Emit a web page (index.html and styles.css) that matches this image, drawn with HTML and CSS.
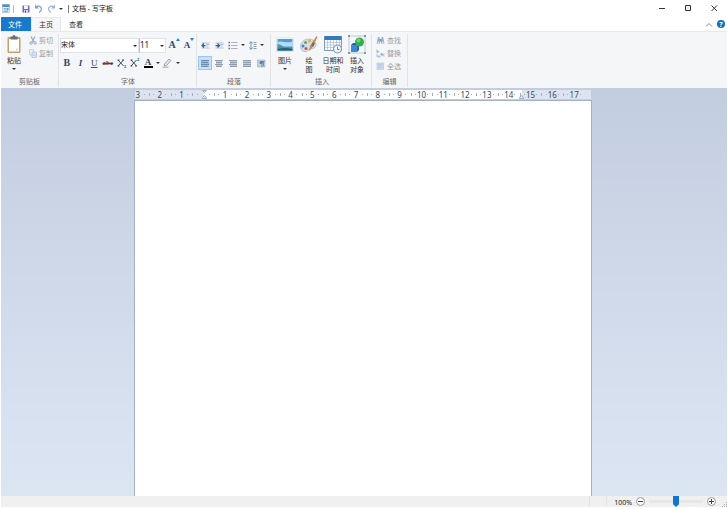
FILE: index.html
```html
<!DOCTYPE html>
<html lang="zh-CN">
<head>
<meta charset="utf-8">
<title>文档 - 写字板</title>
<link rel="stylesheet" href="styles.css">
</head>

<body>
<header class="titlebar">
	<svg class="ico" width="8" height="9" viewBox="0 0 16 18"><rect x="1" y="1" width="14" height="16" fill="#e6f1f9" stroke="#86a5bd"/><path d="M1 1h14v5H1z" fill="#4a90c4"/><path d="M3 9h5M3 12h5M3 15h9" stroke="#7f99ad" stroke-width="1.5"/><path d="M9 8h4v5H9z" fill="#5d9dcb"/></svg>
	<i class="sep"></i>
	<div class="quick">
		<button aria-label="保存"><svg width="8" height="8" viewBox="0 0 16 16"><path d="M1 1h14v14H1z" fill="#7a68ae"/><path d="M4 1h8v7H4z" fill="#f3f1fa"/><path d="M4 10h8v5H4z" fill="#ddd8ee"/><path d="M6 11h2v4H6z" fill="#51427f"/></svg></button>
		<button aria-label="撤消"><svg width="9" height="9" viewBox="0 0 18 18"><path d="M4 6c5-4 11-1 11 4 0 3-2 5-5 7" fill="none" stroke="#8a9cc0" stroke-width="2.5"/><path d="M2 1v8h8z" fill="#8a9cc0"/></svg></button>
		<button aria-label="重做"><svg width="9" height="9" viewBox="0 0 18 18"><path d="M14 6C9 2 3 5 3 10c0 3 2 5 5 7" fill="none" stroke="#a5b5cf" stroke-width="2.5"/><path d="M16 1v8H8z" fill="#a5b5cf"/></svg></button>
	</div>
	<button class="more" aria-label="自定义快速访问工具栏"><i class="down"></i></button>
	<i class="sep dark"></i>
	<h1>文档 - 写字板</h1>
	<div class="winbtns">
		<button aria-label="最小化"><svg width="7" height="7" viewBox="0 0 7 7"><path d="M0 3.500h6" stroke="#333"/></svg></button>
		<button aria-label="最大化"><svg width="7" height="7" viewBox="0 0 7 7"><path d="M.5.5h5v5h-5z" fill="none" stroke="#333"/></svg></button>
		<button aria-label="关闭"><svg width="7" height="7" viewBox="0 0 7 7"><path d="M.5.5l5.500 5.500M6 .5L.5 6" stroke="#333"/></svg></button>
	</div>
</header>

<nav class="tabs">
	<button class="file">文件</button>
	<button class="on">主页</button>
	<button>查看</button>
	<div class="tabs-right">
		<button aria-label="最小化功能区"><svg width="8" height="5" viewBox="0 0 8 5"><path d="M1 4.500l3-3 3 3" fill="none" stroke="#8d8580"/></svg></button>
		<button class="help" aria-label="帮助">?</button>
	</div>
</nav>

<div class="ribbon">
	<section class="group clip">
		<div class="body">
			<button class="big paste">
				<svg width="16" height="19" viewBox="0 0 32 38"><rect x="3" y="4" width="26" height="32" rx="2" fill="#c3a36b"/><path d="M6 8h20v25H6z" fill="#fff"/><path d="M20 33v-6h6z" fill="#d7dde4"/><path d="M9 3h4a3 3 0 0 1 6 0h4v6H9z" fill="#6b7076"/></svg>
				<span>粘贴</span>
				<i class="down"></i>
			</button>
			<div class="lines">
				<button disabled><svg width="8" height="9" viewBox="0 0 16 18"><path d="M4 1l6 11M12 1L6 12" stroke="#9aabc4" stroke-width="2.500"/><circle cx="4" cy="14" r="2.500" fill="none" stroke="#9aabc4" stroke-width="2"/><circle cx="12" cy="14" r="2.500" fill="none" stroke="#9aabc4" stroke-width="2"/></svg>剪切</button>
				<button disabled><svg width="8" height="9" viewBox="0 0 16 18"><path d="M1 1h8v11H1z" fill="#eaf0f8" stroke="#b9c8de" stroke-width="1.500"/><path d="M6 6h9v11H6z" fill="#dde7f4" stroke="#adbfd9" stroke-width="1.500"/><path d="M8 10h5M8 13h5" stroke="#adbfd9"/></svg>复制</button>
			</div>
		</div>
		<h2>剪贴板</h2>
	</section>

	<section class="group font">
		<div class="body stack">
			<div class="row">
				<label class="combo name"><select aria-label="字体系列"><option>宋体</option></select></label>
				<label class="combo size"><select aria-label="字体大小"><option>11</option></select></label>
				<button class="grow" aria-label="增大字体">A<svg width="4" height="3" viewBox="0 0 4 3"><path d="M0 3l2-3 2 3z" fill="#2b83cf"/></svg></button>
				<button class="grow small" aria-label="缩小字体">A<svg width="4" height="3" viewBox="0 0 4 3"><path d="M0 0h4L2 3z" fill="#2b83cf"/></svg></button>
			</div>
			<div class="row">
				<div class="styles">
					<button><b>B</b></button>
					<button><i>I</i></button>
					<button><u>U</u></button>
					<button><s>abc</s></button>
					<button class="x" aria-label="下标"><svg width="10" height="10" viewBox="0 0 20 20"><path d="M2 4l11 12M13 4L2 16M1 4h4M10 4h4M1 16h4" stroke="#34466b" stroke-width="2"/><path d="M15 15h3l-3 4h4" fill="none" stroke="#2b83cf" stroke-width="1.500"/></svg></button>
					<button class="x" aria-label="上标"><svg width="10" height="10" viewBox="0 0 20 20"><path d="M2 4l11 12M13 4L2 16M1 4h4M1 16h4M10 16h4" stroke="#34466b" stroke-width="2"/><path d="M15 1h3l-3 4h4" fill="none" stroke="#2b83cf" stroke-width="1.500"/></svg></button>
				</div>
				<button class="color" aria-label="文本颜色"><span>A</span><i class="down"></i></button>
				<button class="color" aria-label="文本突出显示颜色"><svg width="11" height="10" viewBox="0 0 22 20"><path d="M5 12L14 2l4 3-9 10-5 1z" fill="#dfe6ee" stroke="#7d8ca0" stroke-width="1.500"/><path d="M1 17h12v3H1z" fill="#b9c3cf"/></svg><i class="down"></i></button>
			</div>
		</div>
		<h2>字体</h2>
	</section>

	<section class="group para">
		<div class="body stack">
			<div class="row">
				<button class="tool" aria-label="减少缩进"><svg width="9" height="7" viewBox="0 0 18 14"><path d="M1 2h16M10 5h7M10 8h5M1 12h16" stroke="#a3afc0" stroke-width="1.500"/><path d="M9 7H3M6 3L2 7l4 4" fill="none" stroke="#2f5f9c" stroke-width="2.500"/></svg></button>
				<button class="tool" aria-label="增加缩进"><svg width="9" height="7" viewBox="0 0 18 14"><path d="M1 2h16M11 5h6M11 8h4M1 12h16" stroke="#a3afc0" stroke-width="1.500"/><path d="M1 7h7M5 3l4 4-4 4" fill="none" stroke="#2f5f9c" stroke-width="2.500"/></svg></button>
				<button class="drop" aria-label="启动一个列表"><svg width="10" height="9" viewBox="0 0 20 18"><path d="M6 3h13M6 9h13M6 15h13" stroke="#8d99aa" stroke-width="1.500"/><path d="M1 3h3M1 9h3M1 15h3" stroke="#3e78b5" stroke-width="3"/></svg><i class="down"></i></button>
				<button class="drop" aria-label="行距"><svg width="8" height="9" viewBox="0 0 16 18"><path d="M9 3h6M9 7h6M9 11h6M9 15h6" stroke="#8d99aa" stroke-width="2"/><path d="M4 2v14M1 5l3-4 3 4M1 13l3 4 3-4" fill="none" stroke="#4478ad" stroke-width="1.500"/></svg><i class="down"></i></button>
			</div>
			<div class="row">
				<button class="tool on" aria-label="向左对齐文本"><svg width="8" height="7" viewBox="0 0 8 7"><path d="M0 0h8v7H0z" fill="#a3bbd6"/><path d="M0 .5h8M0 2.500h7M0 4.500h8M0 6.500h7" stroke="#6f8db0"/></svg></button>
				<button class="tool" aria-label="居中"><svg width="8" height="7" viewBox="0 0 8 7"><path d="M1 0h6v7H1z" fill="#c3cad4"/><path d="M0 .5h8M1 2.500h6M0 4.500h8M1 6.500h6" stroke="#919dae"/></svg></button>
				<button class="tool" aria-label="向右对齐文本"><svg width="8" height="7" viewBox="0 0 8 7"><path d="M1 0h7v7H1z" fill="#c3cad4"/><path d="M0 .5h8M1 2.500h7M0 4.500h8M1 6.500h7" stroke="#919dae"/></svg></button>
				<button class="tool" aria-label="对齐"><svg width="8" height="7" viewBox="0 0 8 7"><path d="M0 0h8v7H0z" fill="#c3cad4"/><path d="M0 .5h8M0 2.500h8M0 4.500h8M0 6.500h8" stroke="#919dae"/></svg></button>
				<button class="tool" aria-label="段落"><svg width="9" height="9" viewBox="0 0 18 18"><path d="M1 2h15v14H1z" fill="#c3d0de" stroke="#93a5ba"/><path d="M8 5h7M10 5v11M13 5v9" stroke="#557aa3" stroke-width="1.500"/><circle cx="8" cy="7" r="3" fill="#557aa3"/></svg></button>
			</div>
		</div>
		<h2>段落</h2>
	</section>

	<section class="group insert">
		<div class="body">
			<button class="big">
				<svg width="18" height="19" viewBox="0 0 36 38"><path d="M1 6h34v27H1z" fill="#fff" stroke="#c5ced6"/><path d="M3 8h30v23H3z" fill="#4d9fdc"/><path d="M3 14c8-4 20 4 30-1v10H3z" fill="#b5dcf3"/><path d="M3 18c6 1 10 4 14 6h16v7H3z" fill="#4c96a8"/><path d="M3 28c10-3 20-3 30 0v3H3z" fill="#2b5f70"/></svg>
				<span>图片</span>
				<i class="down"></i>
			</button>
			<button class="big">
				<svg width="18" height="19" viewBox="0 0 36 38"><path d="M17 8C8 8 1 15 1 23c0 8 6 12 12 10 4-1 3-5 7-5 6 0 12-2 12-9 0-7-7-11-15-11z" fill="#d5dee8" stroke="#8c9fb5"/><circle cx="11" cy="15" r="3" fill="#5bad55"/><circle cx="6" cy="22" r="3" fill="#3d89d1"/><circle cx="19" cy="12" r="3" fill="#e7b43f"/><circle cx="12" cy="27" r="3" fill="#cf5348"/><path d="M33 2l2 2-10 20-7 9 2-11z" fill="#c68a50"/><path d="M26 14l4 3-4 7-4-3z" fill="#7d6a60"/></svg>
				<span>绘<br>图</span>
			</button>
			<button class="big">
				<svg width="18" height="19" viewBox="0 0 36 38"><path d="M1 3h34v28H1z" fill="#fff" stroke="#7f9ab8" stroke-width="2"/><path d="M1 2h34v8H1z" fill="#3479be"/><path d="M2 15h32M2 20h32M2 25h32M7 10v20M13 10v20M19 10v20M25 10v20M31 10v20" stroke="#88a9cc"/><circle cx="27" cy="28" r="8" fill="#f4f7fa" stroke="#8796a6" stroke-width="2"/><path d="M27 23v6h4" fill="none" stroke="#526273" stroke-width="1.500"/></svg>
				<span>日期和<br>时间</span>
			</button>
			<button class="big">
				<svg width="18" height="19" viewBox="0 0 36 38"><path d="M2 2h32v34H2z" fill="#f4f9fd" stroke="#8d9cac"/><path d="M6 20l4-4h12v14l-4 4H6z" fill="#1f62b0"/><path d="M6 20h12v14H6z" fill="#3d89d6"/><circle cx="23" cy="14" r="9" fill="#38ad4b"/><circle cx="21" cy="11" r="4" fill="#75cf78"/><path d="M0 0h4v4H0zM32 0h4v4h-4zM0 34h4v4H0zM32 34h4v4h-4z" fill="#8595a5"/></svg>
				<span>插入<br>对象</span>
			</button>
		</div>
		<h2>插入</h2>
	</section>

	<section class="group edit">
		<div class="body">
			<div class="lines">
				<button disabled><svg width="9" height="9" viewBox="0 0 18 18"><path d="M4 2h3l1 13H1zM11 2h3l3 13h-7z" fill="#9aaccb"/><path d="M7 6h4v5H7z" fill="#8195b8"/><path d="M3 11h3v3H3zM12 11h3v3h-3z" fill="#dce5f1"/></svg>查找</button>
				<button disabled><svg width="9" height="9" viewBox="0 0 18 18"><path d="M2 1v6M2 5c4-3 5 3 0 2" fill="none" stroke="#899bb7" stroke-width="1.500"/><path d="M2 10v5h5M5 12l3 3-3 3" fill="none" stroke="#8aabcf" stroke-width="1.500"/><path d="M12 9c-3-2-4 5 0 3v-3 4M17 10c-4-2-4 6 0 4" fill="none" stroke="#899bb7" stroke-width="1.500"/></svg>替换</button>
				<button disabled><svg width="9" height="9" viewBox="0 0 18 18"><path d="M2 2h13v13H2z" fill="#cfdced" stroke="#a7bad2"/><path d="M4 5h9M4 8h9M4 11h9" stroke="#a7bad2"/></svg>全选</button>
			</div>
		</div>
		<h2>编辑</h2>
	</section>
</div>

<main class="desk">
	<div class="ruler">
		<ul>
			<li>3</li><li>2</li><li>1</li><li></li><li>1</li><li>2</li><li>3</li>
			<li>4</li><li>5</li><li>6</li><li>7</li><li>8</li><li>9</li><li>10</li>
			<li>11</li><li>12</li><li>13</li><li>14</li><li>15</li><li>16</li><li>17</li>
		</ul>
		<svg class="mark left" width="5" height="11" viewBox="0 0 5 11"><path d="M.5 1.500h4l-2 2zM.5 9.500v-1l2-2 2 2v1z" fill="#dde2ea" stroke="#a3abb8"/></svg>
		<svg class="mark right" width="5" height="11" viewBox="0 0 5 11"><path d="M.5 9.500v-1l2-2 2 2v1z" fill="#dde2ea" stroke="#a3abb8"/></svg>
	</div>
	<textarea class="paper" aria-label="文档"></textarea>
</main>

<footer class="status">
	<i class="cell"></i>
	<div class="zoom">
		<label for="zoom">100%</label>
		<button aria-label="缩小"><svg width="9" height="9" viewBox="0 0 9 9"><circle cx="4.500" cy="4.500" r="4" fill="#fafafa" stroke="#9b9b9b"/><path d="M2 4.500h5" stroke="#444"/></svg></button>
		<input type="range" id="zoom" min="0" max="200" value="100">
		<button aria-label="放大"><svg width="9" height="9" viewBox="0 0 9 9"><circle cx="4.500" cy="4.500" r="4" fill="#fafafa" stroke="#9b9b9b"/><path d="M2 4.500h5M4.500 2v5" stroke="#444"/></svg></button>
		<svg class="grip" width="5" height="5" viewBox="0 0 5 5"><path d="M4 0h1v1H4zM2 2h1v1H2zM4 2h1v1H4zM0 4h1v1H0zM2 4h1v1H2zM4 4h1v1H4z" fill="#aaa"/></svg>
	</div>
</footer>
</body>
</html>
```
FILE: styles.css
```css
*{
	box-sizing:border-box;
}
body{
	margin:0;
	padding:0 1px 2px;
	height:100vh;
	display:flex;
	flex-direction:column;
	background:#fff;
	color:#333;
	font:7px/9px "Noto Sans","Noto Sans CJK SC",sans-serif;
	overflow:hidden;
}
button{
	display:flex;
	align-items:center;
	justify-content:center;
	margin:0;
	padding:0;
	border:0;
	background:none;
	color:inherit;
	font:inherit;
}
h1,h2{
	margin:0;
	font:inherit;
}
svg{
	display:block;
	flex:none;
}
.down{
	flex:none;
	width:4px;
	border:2px solid transparent;
	border-top-color:#333;
	border-bottom:0;
}

/* title bar */
.titlebar{
	display:flex;
	align-items:center;
	height:17px;
	padding-left:1px;
	color:#111;
}
.sep{
	width:1px;
	height:8px;
	margin:0 5px 0 3px;
	background:#bbb;
}
.sep.dark{
	margin:0 3px 0 4px;
	background:#777;
}
.quick{
	display:flex;
}
.quick button{
	width:13px;
}
.more{
	width:6px;
}
.winbtns{
	display:flex;
	margin-left:auto;
}
.winbtns button{
	width:26px;
	height:17px;
}

/* tabs */
.tabs{
	display:flex;
	height:14px;
}
.tabs button{
	width:30px;
}
.tabs .file{
	padding-right:2px;
	background:#1979ca;
	color:#fff;
}
.tabs .on{
	background:#f5f6f7;
	border:1px solid #e8e9ea;
	border-bottom:0;
}
.tabs-right{
	display:flex;
	align-items:center;
	gap:4px;
	margin-left:auto;
	padding-right:2px;
}
.tabs-right button{
	width:8px;
}
.tabs-right .help{
	height:8px;
	border-radius:50%;
	background:#0f6fc5;
	color:#fff;
	font-weight:bold;
}

/* ribbon */
.ribbon{
	display:flex;
	height:57px;
	padding:2px 0 1px;
	background:#f5f6f7;
	border-top:1px solid #e8e9ea;
}
.group{
	display:flex;
	flex-direction:column;
	border-right:1px solid #e2e3e4;
}
.group h2{
	height:10px;
	line-height:10px;
	text-align:center;
	color:#666;
}
.body{
	flex:1;
	display:flex;
}
.stack{
	flex-direction:column;
	gap:4px;
	padding-top:4px;
}
.row{
	display:flex;
	align-items:center;
	height:14px;
}
.clip{
	width:58px;
}
.font{
	width:138px;
	padding-left:1px;
}
.para{
	width:74px;
	padding-left:1px;
}
.insert{
	width:101px;
	padding-left:2px;
}
.edit{
	width:36px;
}
.big{
	flex-direction:column;
	justify-content:flex-start;
	width:24px;
	padding-top:1px;
	white-space:nowrap;
}
.big span{
	margin-top:2px;
}
.big .down{
	margin-top:3px;
}
.paste{
	width:26px;
}
.lines{
	padding-left:2px;
}
.lines button{
	gap:2px;
	height:13px;
	color:#9a9da1;
}
.edit .lines{
	padding-left:4px;
}

.combo{
	position:relative;
	height:15px;
	border:1px solid #dfe2e6;
	background:#fff;
}
.combo select{
	display:block;
	width:100%;
	height:100%;
	padding:0 0 2px;
	border:0;
	background:none;
	color:#222;
	font:inherit;
	appearance:none;
}
.combo::after{
	content:"";
	position:absolute;
	right:1px;
	top:6px;
	border:2px solid transparent;
	border-top-color:#333;
	border-bottom:0;
}
.name{
	width:79px;
}
.size{
	width:27px;
	border-left-color:#a9c6e2;
	font-size:8px;
}
.grow{
	align-items:flex-start;
	width:14px;
	margin-left:1px;
	color:#34466b;
	font:bold 10px/14px "Liberation Serif",serif;
}
.grow.small{
	font-size:9px;
}
.styles{
	flex:none;
	display:flex;
	width:82px;
	color:#34466b;
	font:9px/12px "Liberation Serif",serif;
}
.styles button{
	flex:1;
}
.styles b{
	font-size:10px;
}
.styles i{
	font-weight:bold;
}
.styles s{
	font-size:7px;
	font-weight:bold;
}
.color{
	gap:3px;
	width:19px;
	color:#34466b;
	font:bold 9px/8px "Liberation Serif",serif;
}
.color span{
	width:9px;
	border-bottom:2px solid #000;
}

.tool{
	width:14px;
	height:14px;
}
.tool.on{
	background:#c9e0f7;
	border:1px solid #9cc6ee;
}
.drop{
	gap:3px;
	width:20px;
	height:14px;
}

/* document area */
.desk{
	flex:1;
	min-height:0;
	display:flex;
	flex-direction:column;
	align-items:center;
	padding:2px 2px 0 0;
	background:linear-gradient(#c3cde0,#dce6f3);
}
.ruler{
	position:relative;
	width:100%;
	max-width:456px;
	height:9px;
	margin-bottom:1px;
	background:linear-gradient(90deg,#dde4f0 69px,#fff 69px,#fff calc(100% - 69px),#dde4f0 calc(100% - 69px));
	overflow:hidden;
}
.ruler ul{
	display:flex;
	margin:0 6px 0 -8px;
	padding:0;
	list-style:none;
}
.ruler li{
	flex:1;
	height:9px;
	text-align:center;
	color:#3c4658;
	font-size:8px;
	background:
		linear-gradient(#a5adba,#a5adba) 0 3px/1px 3px no-repeat,
		linear-gradient(#a5adba,#a5adba) 20% 4px/1px 1px no-repeat,
		linear-gradient(#a5adba,#a5adba) 80% 4px/1px 1px no-repeat;
}
.mark{
	position:absolute;
	top:-1px;
}
.mark.left{
	left:67px;
}
.mark.right{
	right:67px;
}
.paper{
	flex:1;
	display:block;
	width:100%;
	max-width:458px;
	padding:12px 69px;
	border:1px solid #a3b1c9;
	border-bottom:0;
	background:#fff;
	font:inherit;
	resize:none;
	outline:0;
}

/* status bar */
.status{
	display:flex;
	justify-content:flex-end;
	height:11px;
	background:#f0f0f0;
}
.cell{
	width:18px;
	border:1px solid #e4e4e4;
	border-width:0 1px;
}
.zoom{
	display:flex;
	align-items:center;
	padding-left:7px;
	color:#222;
}
.zoom label{
	line-height:11px;
	padding-top:2px;
}
.zoom button{
	width:9px;
	margin:0 4px;
}
.zoom input{
	width:54px;
	height:11px;
	margin:0;
	background:none;
	appearance:none;
}
.zoom input::-webkit-slider-runnable-track{
	height:3px;
	background:#e6e6e6;
}
.zoom input::-webkit-slider-thumb{
	width:6px;
	height:11px;
	margin-top:-4px;
	background:#0f75d0;
	clip-path:polygon(0 0,100% 0,100% 75%,50% 100%,0 75%);
	appearance:none;
}
.grip{
	align-self:flex-end;
	margin-left:2px;
}
```
